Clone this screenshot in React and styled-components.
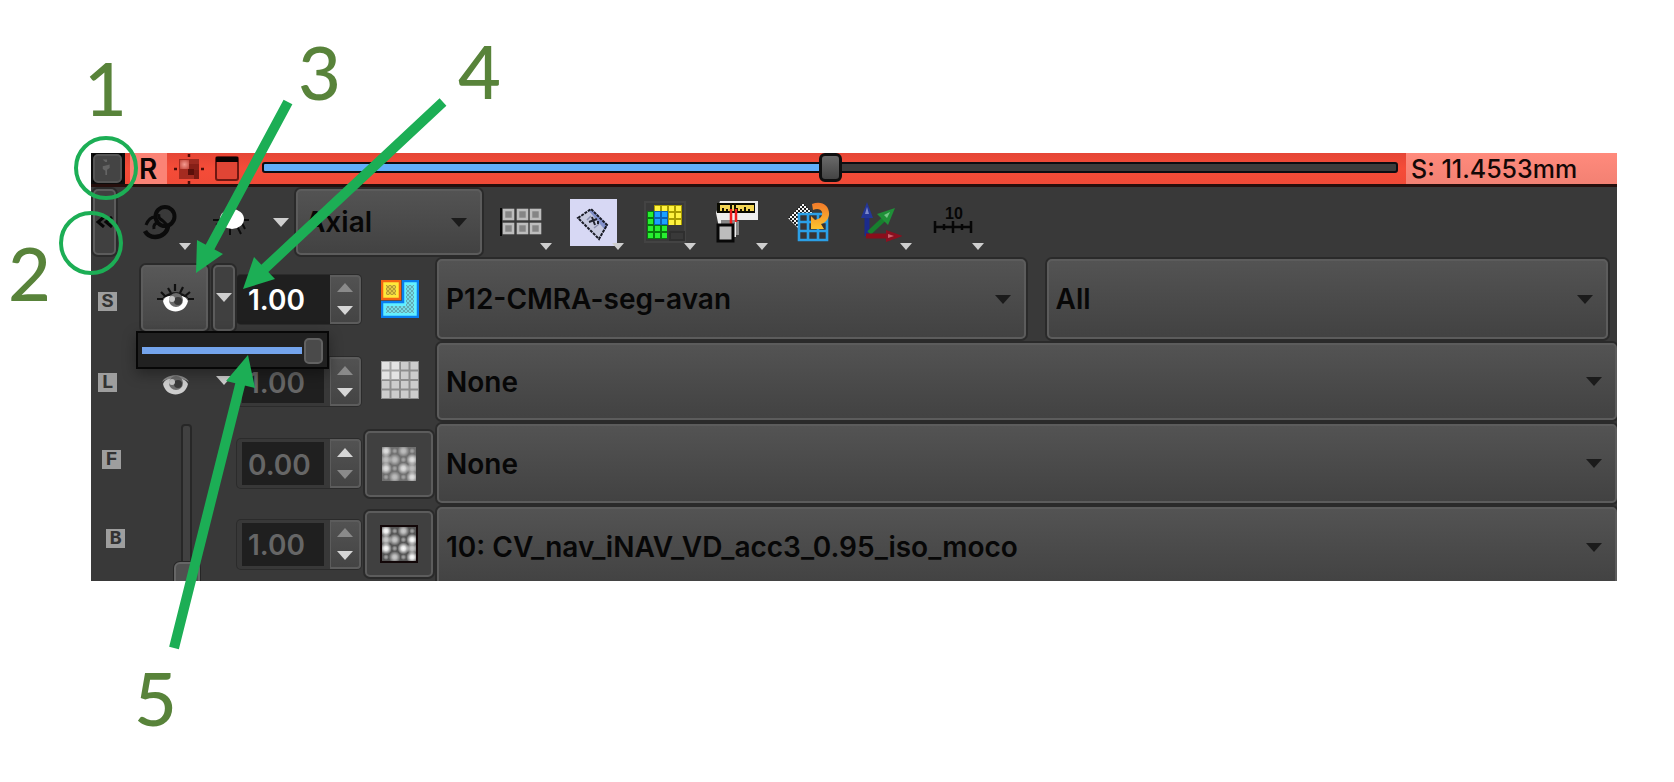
import React from "react";
import styled, { createGlobalStyle, css } from "styled-components";

const Global = createGlobalStyle`
  * { box-sizing: border-box; }
  body { margin: 0; background: #fff; font-family: Inter, "Liberation Sans", sans-serif; }
  button, input, select { font-family: inherit; margin: 0; }
  svg { display: block; }
`;

const GREEN = "#1cae55";

const Page = styled.main`
  position: relative;
  min-height: 100vh;
  padding: 153px 57px 200px 91px;
`;

const Panel = styled.section`
  background: #393939;
  overflow: hidden;
`;

/* ---------- slice bar ---------- */

const SliceBar = styled.header`
  display: flex;
  align-items: stretch;
  height: 34px;
  background: linear-gradient(#e54636, #f54c38 50%, #f04a37);
  border-bottom: 3px solid #260f0d;
`;

const PinButton = styled.button`
  width: 34px;
  padding: 0;
  border: 2px solid #0c0c0c;
  border-width: 1px 3px 2px 2px;
  background: #000;
  & > svg { border: 2px solid #555; border-radius: 5px; background: #444; }
`;

const ViewName = styled.span`
  width: 37px;
  margin-left: 5px;
  padding-left: 9px;
  background: #fb8376;
  color: #0d0504;
  font-size: 28px;
  font-weight: 600;
  line-height: 33px;
`;

const BarButton = styled.button`
  display: flex;
  align-items: center;
  margin-left: ${(p) => p.$gap}px;
  padding: 0;
  border: 0;
  background: none;
`;

const track = css`
  height: 11px;
  border: 2px solid #0d0d12;
  border-radius: 3px;
  background: linear-gradient(90deg, #62aef9 50%, #3c3c3c 50%);
`;
const thumb = css`
  -webkit-appearance: none;
  width: 23px;
  height: 29px;
  margin-top: -11px;
  border: 3px solid #0f0f0f;
  border-radius: 6px;
  background: linear-gradient(#6a6a6a, #444);
`;
const SliceSlider = styled.input`
  -webkit-appearance: none;
  flex: 1;
  min-width: 0;
  height: 29px;
  margin: 0 8px 0 23px;
  background: none;
  &::-webkit-slider-runnable-track { ${track} }
  &::-webkit-slider-thumb { ${thumb} }
`;

const Position = styled.output`
  width: 211px;
  padding-left: 5px;
  background: linear-gradient(#ff8a7c, #f38173);
  color: #130807;
  font-size: 25px;
  font-weight: 500;
  line-height: 33px;
  white-space: nowrap;
`;

/* ---------- shared controls ---------- */

const raised = css`
  border: 2px solid #5c5c5c;
  border-radius: 5px;
  box-shadow: 0 0 0 2px #2a2a2a;
`;

const ComboWrap = styled.div`
  display: flex;
  align-items: center;
  flex: ${(p) => p.$flex || "1"};
  min-width: 0;
  height: ${(p) => p.$height}px;
  padding-right: 13px;
  ${raised}
  background: linear-gradient(#535353, #424242);
`;
const ComboSelect = styled.select`
  appearance: none;
  flex: 1;
  min-width: 0;
  height: 100%;
  padding: 0 0 0 7px;
  border: 0;
  outline: 0;
  background: none;
  color: #070707;
  font-size: 28px;
  font-weight: 600;
`;

const Caret = ({ w = 16, h = 9, fill = "#cfcfcf", up }) => (
  <svg width={w} height={h} viewBox="0 0 16 9" preserveAspectRatio="none" aria-hidden="true">
    <path d={up ? "M0 9 8 0l8 9z" : "M0 0h16L8 9z"} fill={fill} />
  </svg>
);

const Combo = ({ label, value, height, flex }) => (
  <ComboWrap $height={height} $flex={flex}>
    <ComboSelect aria-label={label} defaultValue={value}>
      <option>{value}</option>
    </ComboSelect>
    <Caret fill="#1b1b1b" />
  </ComboWrap>
);

const PushButton = styled.button`
  display: flex;
  align-items: center;
  justify-content: center;
  width: ${(p) => p.$width}px;
  height: 66px;
  padding: 0;
  ${raised}
  background: ${(p) => (p.$lit ? "linear-gradient(#585858, #464646)" : "#404040")};
`;

const FlatButton = styled.button`
  display: flex;
  align-items: center;
  justify-content: center;
  width: ${(p) => p.$width}px;
  height: 66px;
  padding: 0 0 0 ${(p) => p.$indent || 0}px;
  border: 0;
  background: none;
`;

/* ---------- toolbar ---------- */

const Toolbar = styled.div`
  display: flex;
  align-items: center;
  height: 70px;
  padding-left: 2px;
`;
const LinkTool = styled.div`
  display: flex;
  width: 97px;
  padding-left: 8px;
`;
const AxisBox = styled.div`
  display: flex;
  width: 186px;
  margin-right: 3px;
`;
const Tool = styled.button`
  position: relative;
  display: flex;
  align-items: center;
  justify-content: center;
  width: 72px;
  height: 66px;
  padding: 0;
  border: 0;
  background: none;
  & > span { position: absolute; right: 5px; bottom: 5px; }
`;

/* ---------- layers ---------- */

const Layers = styled.div`
  display: grid;
  grid-template-columns: 46px 100px 126px 74px minmax(0, 1fr);
  grid-template-rows: 84px 81px 83px 76px;
`;
const Badge = styled.span`
  align-self: start;
  width: 19px;
  height: 19px;
  margin: ${(p) => p.$drop}px 0 0 ${(p) => p.$indent}px;
  background: #9e9e9e;
  color: #333;
  font: bold 20px/20px "Liberation Mono", monospace;
  text-align: center;
`;
const Cell = styled.div`
  display: flex;
  align-items: center;
  min-width: 0;
  padding: ${(p) => p.$pad || "0"};
  gap: ${(p) => p.$gap || 0}px;
`;
const LayerCombos = styled(Cell)`
  align-items: flex-start;
  padding-top: 2px;
`;
const Spin = styled.div`
  display: flex;
  width: 124px;
  height: 49px;
  border-radius: 4px;
  box-shadow: 0 0 0 1px #2b2b2b;
  background: ${(p) => (p.$on ? "#1f1f1f" : "#383838")};
`;
const SpinInput = styled.input`
  width: 82px;
  margin: 3px 6px 3px 5px;
  padding: 2px 0 0 6px;
  border: 0;
  outline: 0;
  background: #1f1f1f;
  color: ${(p) => (p.$on ? "#fff" : "#666")};
  font-size: 28px;
  font-weight: 600;
`;
const Steps = styled.div`
  display: grid;
  grid-template-rows: 1fr 1fr;
  width: 31px;
  border: 2px solid #5c5c5c;
  border-width: 2px 2px 2px 1px;
  border-radius: 0 4px 4px 0;
  background: linear-gradient(#525252, #444);
`;
const Step = styled.button`
  display: flex;
  align-items: center;
  justify-content: center;
  padding: 0;
  border: 0;
  background: none;
`;

const Spinner = ({ label, value, on, up }) => (
  <Spin $on={on}>
    <SpinInput $on={on} aria-label={label} defaultValue={value} />
    <Steps>
      <Step aria-label={`Increase ${label}`}><Caret up fill={up ? "#d6d6d6" : "#8a8a8a"} /></Step>
      <Step aria-label={`Decrease ${label}`}><Caret fill={up ? "#8a8a8a" : "#d6d6d6"} /></Step>
    </Steps>
  </Spin>
);

const FadeSlot = styled.div`
  grid-column: 2;
  grid-row: 3 / span 2;
  display: flex;
  align-items: flex-start;
  height: 159px;
  padding: 2px 0 0 35px;
`;
const FadeSlider = styled.input`
  -webkit-appearance: none;
  writing-mode: vertical-lr;
  direction: rtl;
  width: 28px;
  height: 166px;
  background: none;
  &::-webkit-slider-runnable-track {
    width: 11px;
    border: 2px solid #272727;
    border-radius: 4px;
    background: #414141;
  }
  &::-webkit-slider-thumb {
    -webkit-appearance: none;
    width: 26px;
    height: 26px;
    margin-left: -9px;
    border: 2px solid #666;
    border-radius: 6px;
    background: #505050;
    box-shadow: 0 0 0 1px #262626;
  }
`;

const OpacityPopup = styled.div`
  position: absolute;
  left: 136px;
  top: 331px;
  display: flex;
  align-items: center;
  width: 193px;
  height: 38px;
  padding: 0 4px;
  border: 2px solid #070707;
  background: #212121;
  box-shadow: 0 5px 14px rgba(0, 0, 0, 0.35);
`;
const OpacitySlider = styled.input`
  -webkit-appearance: none;
  width: 100%;
  height: 26px;
  background: none;
  &::-webkit-slider-runnable-track {
    height: 7px;
    background: linear-gradient(90deg, #74a4ec 160px, transparent 160px);
  }
  &::-webkit-slider-thumb {
    -webkit-appearance: none;
    width: 19px;
    height: 26px;
    margin-top: -9px;
    border: 2px solid #626262;
    border-radius: 5px;
    background: #4a4a4a;
  }
`;

/* ---------- callouts ---------- */

const Callouts = styled.svg`
  position: absolute;
  left: 0;
  top: 0;
  pointer-events: none;
`;
const CalloutNumber = styled.span`
  position: absolute;
  left: ${(p) => p.$x}px;
  top: ${(p) => p.$y}px;
  color: #58833a;
  font: 500 74px/74px Lato, sans-serif;
`;

/* ---------- icons ---------- */

const PinIcon = () => (
  <svg width="29" height="29" viewBox="0 0 29 29" aria-hidden="true">
    <path d="M9 4h5v3h-2zM9 12l8-2v4l-3 2v6h-2v-5l-3-2z" fill="#646464" />
  </svg>
);
const CrosshairIcon = () => (
  <svg width="30" height="30" viewBox="0 0 30 30" aria-hidden="true">
    <defs>
      <radialGradient id="glow" cx=".5" cy=".5" r=".7">
        <stop offset="0" stopColor="#f59a90" /><stop offset="1" stopColor="#c04438" />
      </radialGradient>
    </defs>
    <path d="M5 5h20v20H5z" fill="#a52b20" />
    <path d="M6 6h9v9H6z" fill="url(#glow)" />
    <path d="M15 5h10v5H15z" fill="#9a2a20" /><path d="M15 10h10v6H15z" fill="#861f17" />
    <path d="M14 15h6v6h-6z" fill="#5b0f0a" /><path d="M20 16h5v9h-5z" fill="#7a1a13" />
    <path d="M15 0v3M15 27v3M0 15h3M27 15h3" stroke="#4c0c08" strokeWidth="2.5" />
  </svg>
);
const WindowIcon = () => (
  <svg width="24" height="25" viewBox="0 0 24 25" aria-hidden="true">
    <rect x="1" y="1" width="22" height="23" rx="2" fill="#e04535" stroke="#6f1812" strokeWidth="2" />
    <path d="M1 1h22v5H1z" fill="#0a0202" />
  </svg>
);
const LinkIcon = () => (
  <svg width="36" height="36" viewBox="0 0 36 36" fill="none" stroke="#0b0b0b" aria-hidden="true">
    <ellipse cx="23" cy="12.500" rx="9.500" ry="9.500" strokeWidth="4" />
    <path d="M26 21c0 7-6 12-13 12-5 0-8-2-10-6" strokeWidth="4.500" />
    <path d="M4 21c2-5 5-8 9-8 5 0 8 4 12 8M12 25c-1-4 1-6 5-7M17 10c-1 3 0 5 4 7" strokeWidth="3" strokeDasharray="14 2" />
  </svg>
);
const SunIcon = () => (
  <svg width="36" height="30" viewBox="0 0 36 30" aria-hidden="true">
    <path d="M0 13h36M7 22l5-5M17 28v-8M24 19l4 8M29 16l3 6M3 18l6-3" stroke="#0c0c0c" strokeWidth="2" />
    <ellipse cx="19" cy="12" rx="12" ry="10" fill="#fff" />
  </svg>
);
const LayoutIcon = () => (
  <svg width="42" height="28" viewBox="0 0 42 28" aria-hidden="true">
    <path d="M1 0v28" stroke="#050505" strokeWidth="2" />
    {[2, 16, 29].map((x) => [1, 15].map((y) => (
      <rect key={`${x}-${y}`} x={x + 2} y={y + 1} width="9" height="9" fill="#858585" stroke="#bdbdbd" strokeWidth="2.6" />
    )))}
  </svg>
);
const ReformatIcon = () => (
  <svg width="47" height="47" viewBox="0 0 47 47" aria-hidden="true">
    <path d="M0 0h47v47H0z" fill="#d7d8f4" />
    <path d="M8 19 21 10 37 26 29 40z" fill="#c6c9df" />
    <path d="M19 12l3-2 16 16-3 5z" fill="#8291cc" />
    <path d="M8 19 21 10 37 26 29 40z" fill="none" stroke="#181a25" strokeWidth="2" strokeDasharray="3 1" />
    <path d="M24 29l5-4M17 21l4-4" stroke="#8a8fae" strokeWidth="1.5" />
    <path d="M19 23l8-3M22 18l3 8M28 22v3" fill="none" stroke="#22242f" strokeWidth="2" />
  </svg>
);
const cells = (x0, y0, nx, ny, fill) => {
  const out = [];
  for (let i = 0; i < nx; i++) for (let j = 0; j < ny; j++)
    out.push(<rect key={`${fill}${i}${j}`} x={x0 + i * 7} y={y0 + j * 7} width="5" height="5" fill={fill} />);
  return out;
};
const CompositeIcon = () => (
  <svg width="42" height="42" viewBox="0 0 42 42" aria-hidden="true">
    <path d="M1 1h40v40H1z" fill="none" stroke="#434343" strokeWidth="2" />
    <path d="M10 4h28v20H10z" fill="#a99c00" />
    {cells(11, 5, 4, 3, "#fff340")}
    <path d="M3 10h20v28H3z" fill="#087c0e" />
    {cells(4, 11, 3, 4, "#27ef30")}
    <path d="M10 10h14v14H10z" fill="#0c5fb4" />
    {cells(11, 11, 2, 2, "#1aa0ff")}
    <path d="M26 31h14v8H26z" stroke="#2f2f2f" strokeWidth="2" fill="none" />
  </svg>
);
const MeasureIcon = () => (
  <svg width="42" height="42" viewBox="0 0 42 42" aria-hidden="true">
    <path d="M0 12 4 0h38v19H20v17H5z" fill="#eee" />
    <path d="M5 19h14v4H5zM20 20h3v14h-3z" fill="#888" />
    <path d="M1 2h38v10H1z" fill="#0a0a00" /><path d="M4 4h34v6H4z" fill="#f3d554" />
    <path d="M7 7v3M11 8v2M21 7v3M25 8v2M29 6v4M33 8v2M15 2v10M19 2v10" stroke="#171300" strokeWidth="2" />
    <path d="M15 8v15M20 8v13" stroke="#f21f1f" strokeWidth="2.5" />
    <rect x="2" y="24" width="15" height="16" fill="#bcbcbc" stroke="#080808" strokeWidth="3" />
  </svg>
);
const ResliceIcon = () => (
  <svg width="42" height="40" viewBox="0 0 42 40" aria-hidden="true">
    <defs>
      <pattern id="check" width="4" height="4" patternUnits="userSpaceOnUse">
        <path d="M0 0h4v4H0z" fill="#1d1d1d" /><path d="M0 0h2v2H0zM2 2h2v2H2z" fill="#f4f4f4" />
      </pattern>
      <linearGradient id="swing" x2="0" y2="1">
        <stop offset="0" stopColor="#f27a2a" /><stop offset="1" stopColor="#ffc32e" />
      </linearGradient>
    </defs>
    <path d="M0 16 15 1 27 13 12 28z" fill="url(#check)" />
    <path d="M11 12h28v26H11z" fill="#383434" />
    <path d="M11 12h28v26H11zM20 12v26M30 12v26M11 20h28M11 29h28" fill="none" stroke="#2b9fe6" strokeWidth="2.6" />
    <path d="M24 2c10-4 18 2 17 11-1 5-4 8-8 9l3 5H23V14l4 4c5-1 8-4 7-8-1-3-5-4-9-2z" fill="url(#swing)" />
  </svg>
);
const AxesIcon = () => (
  <svg width="42" height="42" viewBox="0 0 42 42" aria-hidden="true">
    <path d="M7 35V14" stroke="#1b2b8c" strokeWidth="5" /><path d="M1 17 7 1l6 16z" fill="#243697" /><path d="M5 13l2-7 2 7z" fill="#7c88cb" />
    <path d="M9 32 25 17" stroke="#17802e" strokeWidth="5" /><path d="M17 13 35 7 28 24z" fill="#1f9038" /><path d="M24 14l6-3-3 6z" fill="#74c585" />
    <path d="M6 35h22" stroke="#8a0e1b" strokeWidth="5" /><path d="M26 29 43 35 26 41z" fill="#8c1020" /><path d="M28 33l6 2-6 2z" fill="#c9606a" />
  </svg>
);
const RulerIcon = () => (
  <svg width="40" height="34" viewBox="0 0 40 34" aria-hidden="true">
    <text x="21" y="14" textAnchor="middle" fontFamily="Liberation Sans, sans-serif" fontWeight="700" fontSize="16" fill="#060606">10</text>
    <path d="M2 22h36M2 16v12M11 19v6M20 16v12M29 19v6M38 16v12" stroke="#060606" strokeWidth="2.5" />
  </svg>
);
const EyeIcon = ({ lashes }) => (
  <svg width="38" height="28" viewBox="0 0 38 28" aria-hidden="true">
    {lashes && (
      <path d="M1 15h6M5 8l5 5M12 4l3 5M19 0v7M27 3l-3 6M34 8l-6 5M38 15h-6" fill="none" stroke="#101010" strokeWidth="2.2" />
    )}
    <path d="M7 17c3-9 21-9 25 0-3 14-22 14-25 0z" fill={lashes ? "#fff" : "#cdcdcd"} />
    <path d="M6 15c4-9 23-9 27 0-6-5-21-5-27 0z" fill={lashes ? "#141414" : "#8d8d8d"} />
    <circle cx="20" cy="16" r="7" fill="#6b6b6b" />
    <circle cx="22" cy="17" r="4" fill="#3a3a3a" />
    <circle cx="16" cy="15" r="3" fill="#c6c6c6" />
  </svg>
);
const SegmentIcon = () => (
  <svg width="38" height="38" viewBox="0 0 38 38" aria-hidden="true">
    <defs>
      <pattern id="dotsB" width="4" height="4" patternUnits="userSpaceOnUse">
        <path d="M0 0h4v4H0z" fill="#74dde6" /><path d="M0 0h2v2H0zM2 2h2v2H2z" fill="#62abb4" />
      </pattern>
      <pattern id="dotsY" width="4" height="4" patternUnits="userSpaceOnUse">
        <path d="M0 0h4v4H0z" fill="#e2c945" /><path d="M0 0h2v2H0zM2 2h2v2H2z" fill="#b59c34" />
      </pattern>
    </defs>
    <path d="M22 1h15v36H1V22h21z" fill="#63efff" stroke="#087ff0" strokeWidth="2.500" />
    <path d="M25 5h8v28H5v-7h20z" fill="url(#dotsB)" />
    <path d="M1 1h18v18H1z" fill="#ffe93a" stroke="#f46513" strokeWidth="2.500" />
    <path d="M5 5h10v10H5z" fill="url(#dotsY)" />
  </svg>
);
const LabelGridIcon = () => (
  <svg width="38" height="38" viewBox="0 0 38 38" aria-hidden="true">
    <path d="M0 0h38v38H0z" fill="#8e8e8e" />
    {[0, 1, 2, 3].map((i) => [0, 1, 2, 3].map((j) => (
      <rect key={`${i}${j}`} x={1 + i * 9.5} y={1 + j * 9.5} width="7.5" height="7.5" fill={i < 2 && j < 2 ? "#dcdcdc" : "#cdcdcd"} />
    )))}
    <path d="M0 0h19v19H0z" fill="#fff" opacity=".2" />
  </svg>
);
const VOXELS = [
  [3, 1, 2, 1],
  [2, 2, 1, 3],
  [3, 1, 3, 2],
  [1, 2, 1, 3],
];
const VolumeIcon = ({ framed }) => (
  <svg width="38" height="38" viewBox="0 0 38 38" aria-hidden="true">
    <defs>
      <radialGradient id="voxel">
        <stop offset="0" stopColor="#fff" /><stop offset=".35" stopColor="#fff" stopOpacity=".85" /><stop offset="1" stopColor="#fff" stopOpacity="0" />
      </radialGradient>
    </defs>
    {framed && <path d="M0 0h38v38H0z" fill="#120708" />}
    <path d="M2 2h34v34H2z" fill={framed ? "#555" : "#707070"} />
    <svg x="2" y="2" width="34" height="34" viewBox="0 0 34 34">
      {VOXELS.map((row, j) => row.map((v, i) => (
        <circle key={`${i}${j}`} cx={4 + i * 8.7} cy={4 + j * 8.7} r={v === 1 ? 3 : 6} fill="url(#voxel)"
          opacity={(v === 3 ? 1 : v === 2 ? 0.7 : 0.45) * (framed ? 1 : 0.8)} />
      )))}
    </svg>
  </svg>
);

const TOOLS = [
  ["Lightbox layout", LayoutIcon, true],
  ["Reformat", ReformatIcon, true],
  ["Compositing", CompositeIcon, true],
  ["Slice spacing", MeasureIcon, true],
  ["Rotate to volume plane", ResliceIcon, false],
  ["Orientation marker", AxesIcon, true],
  ["Ruler", RulerIcon, true],
];

const NUMBERS = [
  ["1", 84, 51],
  ["2", 8, 236],
  ["3", 298, 35],
  ["4", 458, 34],
  ["5", 134, 661],
];

export default function App() {
  return (
    <Page>
      <Global />
      <Panel>
        <SliceBar>
          <PinButton aria-label="Pin"><PinIcon /></PinButton>
          <ViewName>R</ViewName>
          <BarButton $gap={7} aria-label="Center view"><CrosshairIcon /></BarButton>
          <BarButton $gap={11} aria-label="Maximize view"><WindowIcon /></BarButton>
          <SliceSlider type="range" min="0" max="100" defaultValue="50" aria-label="Slice offset" />
          <Position>S: 11.4553mm</Position>
        </SliceBar>

        <Toolbar>
          <PushButton $width={23} aria-label="Collapse">
            <svg width="18" height="12" viewBox="0 0 18 12" fill="none" stroke="#060606" strokeWidth="3">
              <path d="M8 1 2 6l6 5M16 1l-6 5 6 5" />
            </svg>
          </PushButton>
          <LinkTool>
            <Tool aria-label="Link views"><LinkIcon /><span><Caret w={12} h={7} /></span></Tool>
          </LinkTool>
          <FlatButton $width={36} aria-label="Slice visibility"><SunIcon /></FlatButton>
          <FlatButton $width={47} $indent={17} aria-label="Visibility options"><Caret /></FlatButton>
          <AxisBox><Combo label="Orientation" value="Axial" height={66} /></AxisBox>
          {TOOLS.map(([name, Icon, menu]) => (
            <Tool key={name} aria-label={name}>
              <Icon />
              {menu && <span><Caret w={12} h={7} /></span>}
            </Tool>
          ))}
        </Toolbar>

        <Layers>
          <Badge $indent={7} $drop={35}>S</Badge>
          <Cell $pad="0 0 3px 4px" $gap={5}>
            <PushButton $width={67} $lit aria-label="Segmentation visibility"><EyeIcon lashes /></PushButton>
            <PushButton $width={22} aria-label="Opacity menu"><Caret /></PushButton>
          </Cell>
          <Cell><Spinner label="segmentation opacity" value="1.00" on /></Cell>
          <Cell $pad="0 0 0 18px"><SegmentIcon /></Cell>
          <LayerCombos $gap={21} $pad="0 9px 0 0">
            <Combo label="Segmentation" value="P12-CMRA-seg-avan" height={80} flex="588 1 0" />
            <Combo label="Segment" value="All" height={80} flex="560 1 0" />
          </LayerCombos>

          <Badge $indent={7} $drop={32}>L</Badge>
          <Cell $pad="0 0 2px 4px" $gap={5}>
            <FlatButton $width={67} aria-label="Label visibility"><EyeIcon /></FlatButton>
            <FlatButton $width={22} aria-label="Label menu"><Caret /></FlatButton>
          </Cell>
          <Cell><Spinner label="label opacity" value="1.00" /></Cell>
          <Cell $pad="0 0 4px 18px"><LabelGridIcon /></Cell>
          <LayerCombos><Combo label="Label map" value="None" height={77} /></LayerCombos>

          <Badge $indent={11} $drop={28}>F</Badge>
          <FadeSlot>
            <FadeSlider type="range" min="0" max="100" defaultValue="0" aria-label="Foreground fade" />
          </FadeSlot>
          <Cell><Spinner label="foreground opacity" value="0.00" up /></Cell>
          <Cell $pad="0 0 0 2px"><PushButton $width={68} aria-label="Foreground visibility"><VolumeIcon /></PushButton></Cell>
          <LayerCombos><Combo label="Foreground" value="None" height={79} /></LayerCombos>

          <Badge $indent={15} $drop={24}>B</Badge>
          <Cell $pad="2px 0 0"><Spinner label="background opacity" value="1.00" /></Cell>
          <Cell $pad="2px 0 0 2px"><PushButton $width={68} aria-label="Background visibility"><VolumeIcon framed /></PushButton></Cell>
          <LayerCombos><Combo label="Background" value="10: CV_nav_iNAV_VD_acc3_0.95_iso_moco" height={80} /></LayerCombos>
        </Layers>
      </Panel>

      <OpacityPopup>
        <OpacitySlider type="range" min="0" max="100" defaultValue="100" aria-label="Segmentation opacity" />
      </OpacityPopup>

      <Callouts width="520" height="700" viewBox="0 0 520 700" aria-hidden="true">
        <g fill="none" stroke={GREEN} strokeWidth="4">
          <circle cx="106" cy="168" r="30" />
          <circle cx="91" cy="243" r="30" />
        </g>
        <g stroke={GREEN} strokeWidth="10">
          <path d="M288 102 209 249M443 102 262 271M174 648 241 381" />
        </g>
        <g fill={GREEN}>
          <path d="M196 273 197 240 223 254zM243 289 254 257 275 279zM248 355 226 381 255 388z" />
        </g>
      </Callouts>
      {NUMBERS.map(([n, x, y]) => (
        <CalloutNumber key={n} $x={x} $y={y}>{n}</CalloutNumber>
      ))}
    </Page>
  );
}
